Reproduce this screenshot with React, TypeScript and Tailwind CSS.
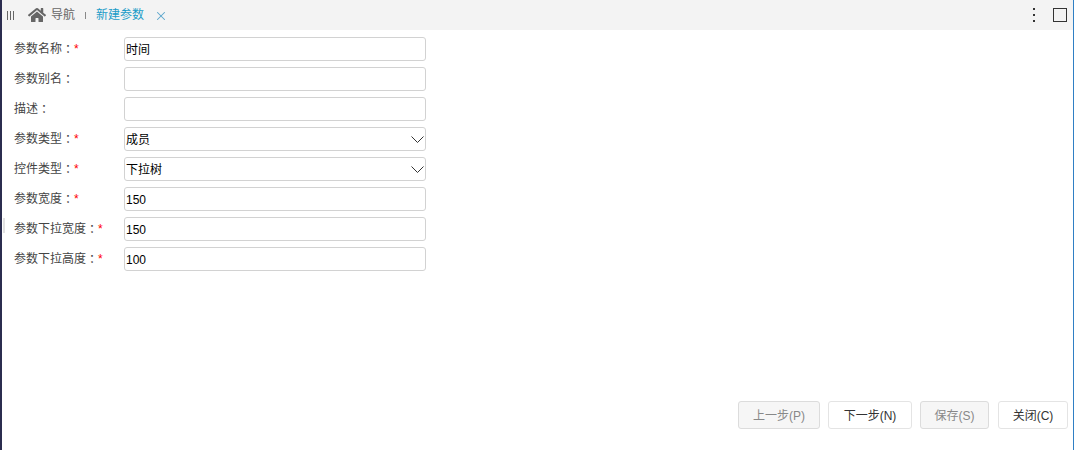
import { X } from "lucide-react";
import { FaHome } from "react-icons/fa";

const font = "font-['Liberation_Sans','Noto_Sans_CJK_SC',sans-serif]";

const fields = [
  { label: "参数名称", required: true, value: "时间" },
  { label: "参数别名", required: false, value: "" },
  { label: "描述", required: false, value: "" },
  { label: "参数类型", required: true, value: "成员", select: true },
  { label: "控件类型", required: true, value: "下拉树", select: true },
  { label: "参数宽度", required: true, value: "150" },
  { label: "参数下拉宽度", required: true, value: "150" },
  { label: "参数下拉高度", required: true, value: "100" },
];

const buttons = [
  { text: "上一步(P)", width: "w-[82px]", disabled: true },
  { text: "下一步(N)", width: "w-[84px]", disabled: false },
  { text: "保存(S)", width: "w-[69px] mr-[1px]", disabled: true },
  { text: "关闭(C)", width: "w-[70px]", disabled: false },
];

const App = () => {
  return (
    <div className={`${font} relative flex h-[450px] w-[1074px] flex-col overflow-hidden border-r border-l-2 border-r-[#2f7fc4] border-l-[#2b2d4f] bg-white text-xs text-[#333]`}>
      {/* Tab bar */}
      <div className="flex h-[30px] shrink-0 items-center bg-[#f3f3f3]">
        <div className="ml-[5px] flex gap-[2px]">
          <span className="h-[9px] w-px bg-[#666]" />
          <span className="h-[9px] w-px bg-[#666]" />
          <span className="h-[9px] w-px bg-[#666]" />
        </div>
        <FaHome size={18} className="ml-[14px] mb-[1px] text-[#666]" />
        <span className="ml-[5px] text-[#666]">导航</span>
        <span className="ml-[10px] h-[7px] w-px bg-[#888]" />
        <span className="ml-[10px] text-[#1a9cc8]">新建参数</span>
        <X size={14} strokeWidth={1.8} className="ml-[10px] mt-[2px] text-[#5aa5cc]" />
        <div className="ml-auto flex items-center">
          <div className="flex flex-col gap-[4px]">
            <span className="h-[2px] w-[2px] bg-[#333]" />
            <span className="h-[2px] w-[2px] bg-[#333]" />
            <span className="h-[2px] w-[2px] bg-[#333]" />
          </div>
          <span className="ml-[18px] mr-[6px] h-[14px] w-[14px] border-[1.5px] border-[#333]" />
        </div>
      </div>

      {/* Form */}
      <div className="flex flex-col gap-[6px] pt-[7px]">
        {fields.map((f) => (
          <div key={f.label} className="flex h-[24px] items-center">
            <label className="ml-[12px] mb-[1px] flex w-[110px] shrink-0 items-center text-[#444]">
              {f.label}
              <span className="font-['Noto_Sans_CJK_TC'] leading-none">：</span>
              {f.required && <span className="text-[#f00]">*</span>}
            </label>
            <div className="flex h-[24px] w-[302px] items-center justify-between rounded-[3px] border border-[#d2d2d2] pl-[1px] pr-[1px] pt-[1px] text-black">
              <span>{f.value}</span>
              {f.select && (
                <svg width="13" height="7" viewBox="0 0 13 7" fill="none" stroke="#333" strokeWidth="1" className="mb-[1px]">
                  <path d="M.5.5l6 6 6-6" />
                </svg>
              )}
            </div>
          </div>
        ))}
      </div>

      {/* Footer buttons */}
      <div className="mt-auto mb-[21px] flex justify-end gap-[8px] pr-[5px]">
        {buttons.map((b) => (
          <button
            key={b.text}
            className={`h-[28px] ${b.width} rounded-[3px] border pt-[1px] text-xs ${
              b.disabled
                ? "border-[#dcdcdc] bg-[#f6f6f6] text-[#888]"
                : "border-[#e4e4e4] bg-white text-[#333]"
            }`}
          >
            {b.text}
          </button>
        ))}
      </div>

      {/* Splitter handle */}
      <span className="absolute left-[1px] top-[218px] h-[15px] w-[2px] bg-[#e2e2e2]" />
    </div>
  );
};

export default App;
